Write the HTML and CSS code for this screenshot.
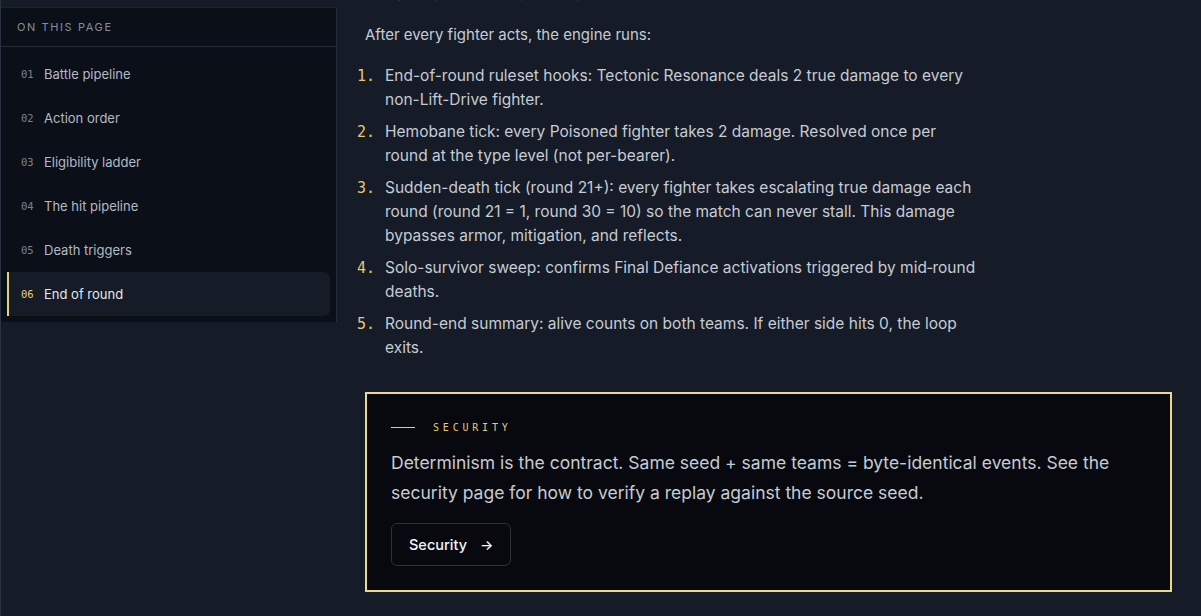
FILE: index.html
```html
<!DOCTYPE html>
<html lang="en">
<head>
<meta charset="UTF-8">
<meta name="viewport" content="width=device-width, initial-scale=1.0">
<title>Battle engine</title>
<link rel="stylesheet" href="styles.css">
</head>
<body>
    <div class="layout">
        <aside class="toc">
            <div class="toc-head">ON THIS PAGE</div>
            <ul class="toc-list">
                <li class="toc-item"><span class="toc-num">01</span>Battle pipeline</li>
                <li class="toc-item"><span class="toc-num">02</span>Action order</li>
                <li class="toc-item"><span class="toc-num">03</span>Eligibility ladder</li>
                <li class="toc-item"><span class="toc-num">04</span>The hit pipeline</li>
                <li class="toc-item"><span class="toc-num">05</span>Death triggers</li>
                <li class="toc-item active"><span class="toc-num">06</span>End of round</li>
            </ul>
        </aside>

        <main class="content">
            <p class="cut">Everything runs through a single loop (per round).</p>
            <p class="lead">After every fighter acts, the engine runs:</p>
            <ol class="steps">
                <li><span class="step-num">1.</span><span>End-of-round ruleset hooks: Tectonic Resonance deals 2 true damage to every non-Lift-Drive fighter.</span></li>
                <li><span class="step-num">2.</span><span>Hemobane tick: every Poisoned fighter takes 2 damage. Resolved once per round at the type level (not per-bearer).</span></li>
                <li><span class="step-num">3.</span><span>Sudden-death tick (round 21+): every fighter takes escalating true damage each round (round 21 = 1, round 30 = 10) so the match can never stall. This damage bypasses armor, mitigation, and reflects.</span></li>
                <li><span class="step-num">4.</span><span>Solo-survivor sweep: confirms Final Defiance activations triggered by mid&#8209;round deaths.</span></li>
                <li><span class="step-num">5.</span><span>Round-end summary: alive counts on both teams. If either side hits 0, the loop exits.</span></li>
            </ol>

            <section class="callout">
                <div class="eyebrow"><span class="eyebrow-line"></span>SECURITY</div>
                <p class="callout-text">Determinism is the contract. Same seed + same teams = byte-identical events. See the security page for how to verify a replay against the source seed.</p>
                <a class="btn" href="#">Security <span class="arrow">&rarr;</span></a>
            </section>
        </main>
    </div>
</body>
</html>
```

FILE: styles.css
```css
body {
    margin: 0;
    padding: 0;
    background: #151b27;
    color: #c6cbd4;
    font-family: Inter, "Noto Sans", sans-serif;
    height: 616px;
    overflow: hidden;
    border-left: 1px solid #2a3140;
}
.layout {
    display: flex;
    align-items: flex-start;
}

/* sidebar */
.toc {
    width: 335px;
    flex-shrink: 0;
    margin-top: 7px;
    background: #0b0f18;
    border-right: 1px solid #262d3a;
    border-top: 1px solid #1c2230;
    padding-bottom: 6px;
}
.toc-head {
    height: 38px;
    line-height: 38px;
    padding-left: 16px;
    font-size: 11px;
    letter-spacing: 1.6px;
    color: #858d9c;
    border-bottom: 1px solid #262d3a;
}
.toc-list {
    list-style: none;
    margin: 0;
    padding: 5px 6px 0 6px;
}
.toc-item {
    height: 44px;
    display: flex;
    align-items: center;
    padding-left: 12px;
    border-left: 2px solid transparent;
    border-radius: 0 6px 6px 0;
    font-size: 13px;
    color: #b3bac5;
}
.toc-num {
    font-family: "DejaVu Sans Mono", monospace;
    font-size: 10.5px;
    color: #7b8392;
    width: 23px;
}
.toc-item.active {
    background: #151b27;
    border-left-color: #e8cf7c;
    color: #e4e7ec;
}
.toc-item.active .toc-num {
    color: #e8cf7c;
}

/* main column */
.content {
    flex: 1;
    padding: 0 29px 0 28px;
}
.cut {
    margin: -20px 0 0 0;
    font-size: 15px;
    line-height: 24px;
}
.lead {
    margin: 19px 0 17px 0;
    font-size: 15px;
    line-height: 24px;
}
.steps {
    list-style: none;
    margin: 0 0 32px -8px;
    padding: 0;
    max-width: 621px;
}
.steps li {
    display: flex;
    font-size: 15.5px;
    line-height: 24px;
    margin-bottom: 8px;
}
.step-num {
    font-family: "DejaVu Sans Mono", monospace;
    color: #e8c872;
    width: 28px;
    flex-shrink: 0;
    font-size: 15px;
}

/* callout */
.callout {
    background: #07090f;
    border: 2px solid #f0d68c;
    padding: 28px 24px 24px 24px;
}
.eyebrow {
    display: flex;
    align-items: center;
    height: 10px;
    font-family: "DejaVu Sans Mono", monospace;
    font-size: 10px;
    letter-spacing: 3.8px;
    color: #e8c872;
    margin-bottom: 16px;
}
.eyebrow-line {
    width: 24px;
    height: 1px;
    background: #e8c872;
    margin-right: 18px;
}
.callout-text {
    margin: 0;
    font-size: 17.5px;
    line-height: 30px;
    color: #c6cbd4;
    max-width: 740px;
}
.btn {
    display: inline-flex;
    align-items: center;
    gap: 13px;
    margin-top: 15px;
    height: 41px;
    padding: 0 17px;
    border: 1px solid #2b3242;
    border-radius: 6px;
    color: #f2f4f7;
    font-size: 14.5px;
    font-weight: 500;
    text-decoration: none;
}
.arrow {
    font-size: 14px;
}
```
